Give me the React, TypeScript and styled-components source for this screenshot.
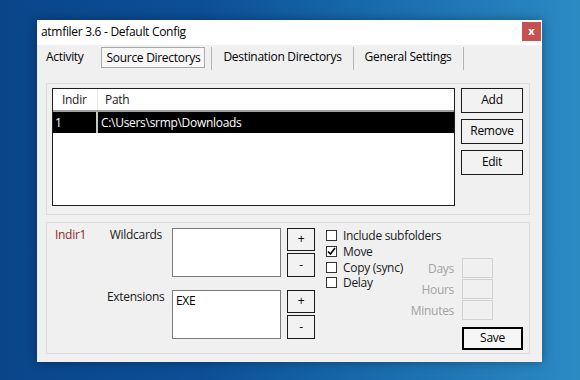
import styled, { createGlobalStyle } from "styled-components";

const GlobalStyle = createGlobalStyle`
  html, body {
    margin: 0;
    padding: 0;
    width: 580px;
    height: 380px;
    overflow: hidden;
  }
  body {
    font-family: "Open Sans", "Noto Sans", sans-serif;
    font-size: 12px;
    letter-spacing: -0.3px;
    color: #000;
    background: linear-gradient(90deg, #0a4589 0%, #0c4f98 35%, #1b70b0 70%, #2c8ac3 100%);
  }
  * {
    box-sizing: border-box;
  }
`;

const Desktop = styled.div`
  width: 580px;
  height: 380px;
  padding: 20px 0 0 37px;
`;

const Window = styled.div`
  width: 505px;
  height: 342px;
  background: #f0f0f0;
  display: flex;
  flex-direction: column;
  box-shadow: 0 0 10px rgba(0, 0, 0, 0.35);
`;

const TitleBar = styled.div`
  height: 25px;
  background: #fff;
  display: flex;
  align-items: flex-start;
  justify-content: space-between;
  padding: 0 1px 0 4px;
`;

const Title = styled.div`
  line-height: 24px;
  font-size: 12px;
`;

const CloseButton = styled.div`
  width: 19px;
  height: 19px;
  margin-top: 2px;
  background: #c75050;
  color: #fff;
  font-size: 11px;
  font-weight: 700;
  letter-spacing: 0;
  display: flex;
  align-items: center;
  justify-content: center;
  padding-bottom: 2px;
`;

const TabStrip = styled.div`
  height: 24px;
  display: flex;
  align-items: flex-start;
  padding: 2px 0 0 4px;
`;

const Tab = styled.div<{ $active?: boolean; $first?: boolean; $left?: boolean }>`
  line-height: 20px;
  white-space: nowrap;
  padding: ${({ $active, $first }) => ($first ? "0 17px 0 5px" : $active ? "0 4px 0 5px" : "0 11px")};
  border: ${({ $active }) => ($active ? "1px solid #a9a9a9" : "none")};
  border-right: ${({ $active, $first }) =>
    $active ? "1px solid #a9a9a9" : $first ? "none" : "1px solid #b4b4b4"};
  border-left: ${({ $active, $left }) =>
    $active ? "1px solid #a9a9a9" : $left ? "1px solid #b4b4b4" : "none"};
  margin-left: ${({ $left }) => ($left ? "6px" : "0")};
  height: ${({ $active }) => ($active ? "21px" : "23px")};
  background: ${({ $active }) => ($active ? "#f7f7f7" : "transparent")};
`;

const Content = styled.div`
  flex: 1;
  display: flex;
  flex-direction: column;
  gap: 7px;
  padding: 14px 12px 0 9px;
`;

const Group = styled.div`
  height: 132px;
  border: 1px solid #dcdcdc;
  display: flex;
`;

const ListGroup = styled(Group)`
  padding: 4px 0 0 5px;
  gap: 6px;
`;

const ListBox = styled.div`
  width: 403px;
  height: 118px;
  background: #fff;
  border: 1px solid #1e1e1e;
`;

const ListRow = styled.div<{ $header?: boolean }>`
  display: flex;
  height: ${({ $header }) => ($header ? "23px" : "21px")};
  line-height: ${({ $header }) => ($header ? "22px" : "21px")};
  background: ${({ $header }) => ($header ? "#fff" : "#000")};
  color: ${({ $header }) => ($header ? "#1a1a1a" : "#fff")};
  border-bottom: ${({ $header }) => ($header ? "2px solid #a0a0a0" : "none")};
`;

const IndirCell = styled.div<{ $header?: boolean }>`
  width: 45px;
  padding-left: ${({ $header }) => ($header ? "9px" : "2px")};
  border-right: ${({ $header }) => ($header ? "1px solid #e8e8e8" : "2px solid #c8c8c8")};
`;

const PathCell = styled.div<{ $header?: boolean }>`
  flex: 1;
  padding-left: ${({ $header }) => ($header ? "7px" : "3px")};
  white-space: nowrap;
`;

const ButtonColumn = styled.div`
  display: flex;
  flex-direction: column;
  gap: 6px;
`;

const Button = styled.div<{ $w: number; $h: number; $strong?: boolean }>`
  width: ${({ $w }) => $w}px;
  height: ${({ $h }) => $h}px;
  border: ${({ $strong }) => ($strong ? "2px solid #000" : "1px solid #1a1a1a")};
  background: ${({ $strong }) => ($strong ? "#f6f6f6" : "#f2f2f2")};
  display: flex;
  align-items: center;
  justify-content: center;
  line-height: 1;
  padding-bottom: 1px;
`;

const FilterGroup = styled(Group)`
  padding: 5px 6px 0 8px;
`;

const FilterGrid = styled.div`
  display: grid;
  grid-template-columns: 46px 59px 109px 28px;
  grid-template-rows: 49px 49px;
  column-gap: 6px;
  row-gap: 13px;
`;

const Label = styled.div<{ $accent?: boolean; $right?: boolean }>`
  line-height: 13px;
  color: ${({ $accent }) => ($accent ? "#8e2a2a" : "#1a1a1a")};
  text-align: ${({ $right }) => ($right ? "right" : "left")};
  padding-right: ${({ $right }) => ($right ? "4px" : "0")};
  white-space: nowrap;
`;

const TextList = styled.div`
  border: 1px solid #7a7a7a;
  background: #fff;
  padding: 2px 3px;
  line-height: 16px;
`;

const PlusMinus = styled.div`
  display: flex;
  flex-direction: column;
  gap: 2px;
`;

const OptionsArea = styled.div`
  display: flex;
  margin-left: 11px;
`;

const CheckList = styled.div`
  width: 79px;
  display: flex;
  flex-direction: column;
`;

const CheckRow = styled.div`
  height: 15.7px;
  display: flex;
  align-items: center;
  gap: 6px;
  white-space: nowrap;
  color: #1a1a1a;
`;

const CheckBox = styled.div`
  flex-shrink: 0;
  width: 11px;
  height: 11px;
  border: 1px solid #333;
  background: #fff;
  display: flex;
  align-items: center;
  justify-content: center;
`;

const TimeGrid = styled.div`
  width: 118px;
  padding-top: 30px;
  display: grid;
  grid-template-columns: 57px 31px 30px;
  grid-template-rows: 20px 20px 20px;
  row-gap: 1px;
  align-items: center;
`;

const TimeLabel = styled.div`
  color: #a3a3a3;
  text-align: right;
  padding-right: 8px;
  white-space: nowrap;
`;

const TimeBox = styled.div`
  height: 20px;
  border: 1px solid #d2d2d2;
  background: #f0f0f0;
`;

const SaveCell = styled.div`
  grid-column: 2 / span 2;
  margin-top: 3px;
`;

const Check = () => (
  <svg width="9" height="9" viewBox="0 0 9 9">
    <path d="M1 4.5 L3.5 7 L8 1" fill="none" stroke="#000" strokeWidth="1.6" />
  </svg>
);

const options = [
  { label: "Include subfolders", checked: false },
  { label: "Move", checked: true },
  { label: "Copy (sync)", checked: false },
  { label: "Delay", checked: false },
];

export default function App() {
  return (
    <>
      <GlobalStyle />
      <Desktop>
        <Window>
          <TitleBar>
            <Title>atmfiler 3.6 - Default Config</Title>
            <CloseButton>x</CloseButton>
          </TitleBar>
          <TabStrip>
            <Tab $first>Activity</Tab>
            <Tab $active>Source Directorys</Tab>
            <Tab $left>Destination Directorys</Tab>
            <Tab>General Settings</Tab>
          </TabStrip>
          <Content>
            <ListGroup>
              <ListBox>
                <ListRow $header>
                  <IndirCell $header>Indir</IndirCell>
                  <PathCell $header>Path</PathCell>
                </ListRow>
                <ListRow>
                  <IndirCell>1</IndirCell>
                  <PathCell>C:\Users\srmp\Downloads</PathCell>
                </ListRow>
              </ListBox>
              <ButtonColumn>
                <Button $w={62} $h={25}>Add</Button>
                <Button $w={62} $h={25}>Remove</Button>
                <Button $w={62} $h={25}>Edit</Button>
              </ButtonColumn>
            </ListGroup>
            <FilterGroup>
              <FilterGrid>
                <Label $accent>Indir1</Label>
                <Label $right>Wildcards</Label>
                <TextList />
                <PlusMinus>
                  <Button $w={28} $h={23}>+</Button>
                  <Button $w={28} $h={24}>-</Button>
                </PlusMinus>
                <div />
                <Label $right>Extensions</Label>
                <TextList>EXE</TextList>
                <PlusMinus>
                  <Button $w={28} $h={23}>+</Button>
                  <Button $w={28} $h={24}>-</Button>
                </PlusMinus>
              </FilterGrid>
              <OptionsArea>
                <CheckList>
                  {options.map((o) => (
                    <CheckRow key={o.label}>
                      <CheckBox>{o.checked && <Check />}</CheckBox>
                      {o.label}
                    </CheckRow>
                  ))}
                </CheckList>
                <TimeGrid>
                  <TimeLabel>Days</TimeLabel>
                  <TimeBox />
                  <div />
                  <TimeLabel>Hours</TimeLabel>
                  <TimeBox />
                  <div />
                  <TimeLabel>Minutes</TimeLabel>
                  <TimeBox />
                  <div />
                  <SaveCell>
                    <Button $w={61} $h={23} $strong>Save</Button>
                  </SaveCell>
                </TimeGrid>
              </OptionsArea>
            </FilterGroup>
          </Content>
        </Window>
      </Desktop>
    </>
  );
}
